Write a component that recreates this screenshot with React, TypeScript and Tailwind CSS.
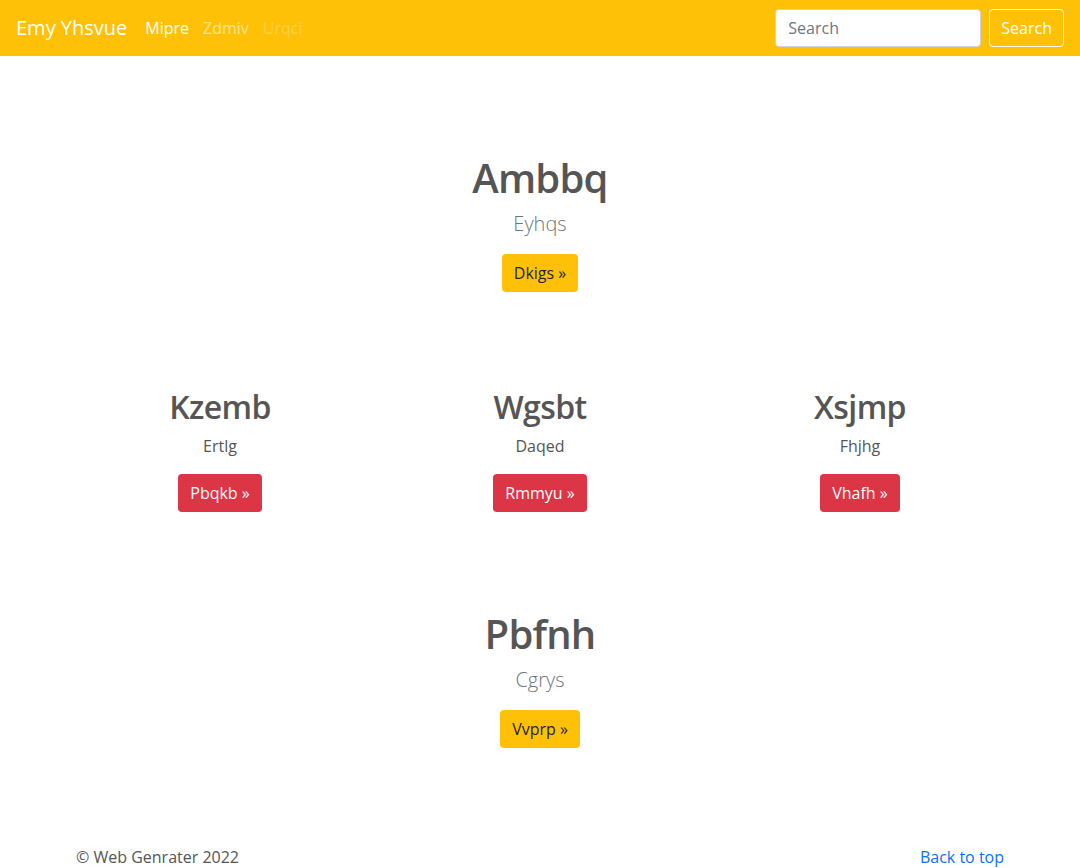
const FONT = "font-['Segoe_UI','Open_Sans','Noto_Sans',sans-serif]"

const FEATURES = [
  { title: 'Kzemb', text: 'Ertlg', action: 'Pbqkb' },
  { title: 'Wgsbt', text: 'Daqed', action: 'Rmmyu' },
  { title: 'Xsjmp', text: 'Fhjhg', action: 'Vhafh' },
]

function Hero({ title, lead, action }: { title: string; lead: string; action: string }) {
  return (
    <section className="flex flex-col items-center text-center">
      <h1 className="text-[40px] leading-[1.2] font-semibold tracking-[-0.8px] text-[#555] mb-[7px]">{title}</h1>
      <p className="text-[20px] leading-[30px] font-light text-[#6c757d] mb-[15px]">{lead}</p>
      <button className="h-[38px] px-3 rounded-[4px] bg-[#ffc107] text-[#212529] text-[16px]">
        {action} »
      </button>
    </section>
  )
}

export default function App() {
  return (
    <div className={`${FONT} min-h-[868px] bg-white`}>
      {/* Navbar */}
      <nav className="h-14 bg-[#ffc107] flex items-center px-4">
        <span className="text-white text-[20px] mr-[18px]">Emy Yhsvue</span>
        <div className="flex items-center gap-[14px] text-[16px]">
          <a className="text-white">Mipre</a>
          <a className="text-white/55">Zdmiv</a>
          <a className="text-white/25">Urqci</a>
        </div>
        <form className="ml-auto flex items-center gap-2">
          <input
            placeholder="Search"
            className="w-[206px] h-[38px] rounded-[4px] bg-white border border-[#ced4da] px-3 text-[16px] placeholder:text-[#6c757d] outline-none"
          />
          <button type="button" className="h-[38px] px-[11px] rounded-[4px] border border-white/90 text-white text-[16px]">
            Search
          </button>
        </form>
      </nav>

      <main className="pt-[98px]">
        <Hero title="Ambbq" lead="Eyhqs" action="Dkigs" />

        <div className="w-[960px] mx-auto grid grid-cols-3 pt-[96px]">
          {FEATURES.map((f) => (
            <div key={f.title} className="flex flex-col items-center text-center">
              <h2 className="text-[32px] leading-[38px] font-semibold tracking-[-0.6px] text-[#555] mb-2">{f.title}</h2>
              <p className="text-[16px] leading-6 text-[#555] mb-4">{f.text}</p>
              <button className="h-[38px] px-3 rounded-[4px] bg-[#dc3545] text-white text-[16px]">
                {f.action} »
              </button>
            </div>
          ))}
        </div>

        <div className="pt-[98px]">
          <Hero title="Pbfnh" lead="Cgrys" action="Vvprp" />
        </div>
      </main>

      <footer className="w-[960px] mx-auto px-4 pt-[97px] flex justify-between text-[16px] leading-6">
        <p className="text-[#555]">© Web Genrater 2022</p>
        <a className="text-[#0d6efd]">Back to top</a>
      </footer>
    </div>
  )
}
